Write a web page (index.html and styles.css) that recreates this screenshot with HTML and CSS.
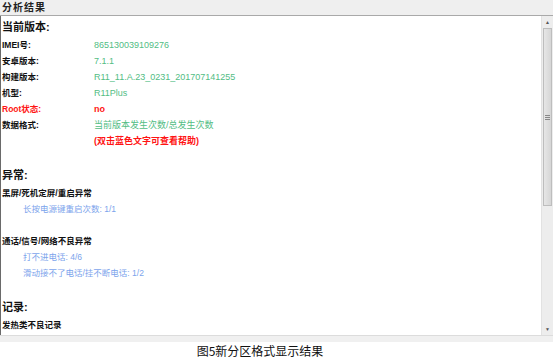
FILE: index.html
```html
<!DOCTYPE html>
<html lang="zh-CN">
<head>
  <meta charset="UTF-8">
  <title>分析结果</title>
  <meta name="viewport" content="width=device-width, initial-scale=1.0">
  <link rel="stylesheet" href="styles.css">
</head>
<body>
  <div class="panel">
    <div class="panel-title">分析结果</div>
    <div class="panel-body">
      <div class="content">
        <h3 class="section first">当前版本:</h3>
        <div class="row"><span class="label">IMEI号:</span><span class="value">865130039109276</span></div>
        <div class="row"><span class="label">安卓版本:</span><span class="value">7.1.1</span></div>
        <div class="row"><span class="label">构建版本:</span><span class="value">R11_11.A.23_0231_201707141255</span></div>
        <div class="row"><span class="label">机型:</span><span class="value">R11Plus</span></div>
        <div class="row"><span class="label red">Root状态:</span><span class="value red">no</span></div>
        <div class="row"><span class="label">数据格式:</span><span class="value">当前版本发生次数/总发生次数</span></div>
        <div class="row"><span class="label"></span><span class="value red">(双击蓝色文字可查看帮助)</span></div>

        <h3 class="section">异常:</h3>
        <div class="group">黑屏/死机定屏/重启异常</div>
        <div class="item">长按电源键重启次数: 1/1</div>

        <div class="group spaced">通话/信号/网络不良异常</div>
        <div class="item">打不进电话: 4/6</div>
        <div class="item">滑动接不了电话/挂不断电话: 1/2</div>

        <h3 class="section">记录:</h3>
        <div class="group">发热类不良记录</div>
      </div>
      <div class="scrollbar">
        <div class="arrow up">&#9650;</div>
        <div class="thumb"><span class="grip"></span></div>
        <div class="track"></div>
        <div class="arrow down">&#9660;</div>
      </div>
    </div>
    <div class="panel-foot"></div>
  </div>
  <div class="caption">图5新分区格式显示结果</div>
</body>
</html>
```

FILE: styles.css
```css
body {
  margin: 0;
  background: #fff;
  color: #111;
  font-family: 'Liberation Sans', 'Noto Sans CJK SC', sans-serif;
}

.panel {
  width: 553px;
}

.panel-title {
  height: 15px;
  line-height: 15px;
  background: #efefef;
  border-bottom: 1px solid #a9a9a9;
  padding-left: 2px;
  font-size: 10px;
  font-weight: bold;
  letter-spacing: 1px;
  color: #222;
}

.panel-body {
  display: flex;
  height: 319px;
}

.content {
  flex: 1;
  border-left: 1px solid #6a6a6a;
  background: #fff;
  padding-left: 1px;
  overflow: hidden;
}

.section {
  margin: 16px 0 0;
  height: 20px;
  line-height: 20px;
  font-size: 11px;
  font-weight: bold;
  color: #111;
}

.section.first {
  margin-top: 1px;
}

.row {
  display: flex;
  height: 16px;
  line-height: 16px;
}

.label {
  width: 92px;
  font-size: 8.5px;
  font-weight: bold;
}

.value {
  font-size: 9px;
  color: #52bd84;
}

.red {
  color: #ff1414;
  font-weight: bold;
}

.group {
  height: 16px;
  line-height: 16px;
  font-size: 8.5px;
  font-weight: bold;
}

.group.spaced {
  margin-top: 16px;
}

.item {
  height: 16px;
  line-height: 16px;
  padding-left: 21px;
  font-size: 8.5px;
  color: #7ca4ec;
}

.scrollbar {
  width: 11px;
  display: flex;
  flex-direction: column;
  background: #ededed;
  border-left: 1px solid #e2e2e2;
}

.arrow {
  height: 12px;
  line-height: 12px;
  text-align: center;
  font-size: 5px;
  color: #555;
}

.thumb {
  height: 176px;
  margin: 0 1px;
  border: 1px solid #bdbdbd;
  background: linear-gradient(to right, #e6e6e6, #d6d6d6);
  display: flex;
  align-items: center;
  justify-content: center;
}

.grip {
  width: 5px;
  height: 5px;
  background: repeating-linear-gradient(to bottom, #888 0 1px, transparent 1px 2px);
}

.track {
  flex: 1;
}

.panel-foot {
  height: 6px;
  background: #f0f0f0;
  border-top: 1px solid #dcdcdc;
}

.caption {
  width: 520px;
  text-align: center;
  font-family: 'Noto Sans CJK SC', sans-serif;
  font-size: 12px;
  line-height: 18px;
  color: #111;
}
```
